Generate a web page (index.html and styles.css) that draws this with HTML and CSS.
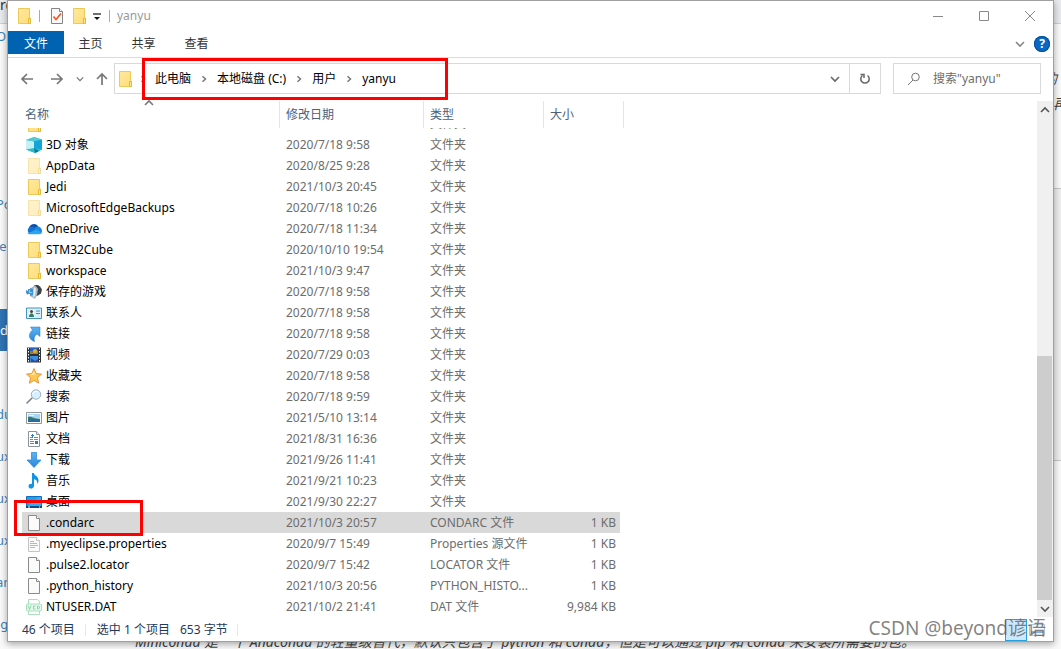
FILE: index.html
```html
<!DOCTYPE html>
<html lang="zh-CN">
<head>
<meta charset="utf-8">
<meta name="viewport" content="width=device-width, initial-scale=1">
<title>yanyu</title>
<link rel="stylesheet" href="styles.css">
</head>
<body>
<svg class="sprite" aria-hidden="true">
  <defs>
    <linearGradient id="gold" x1="0" y1="0" x2="1" y2="1"><stop offset="0" stop-color="#ffe9a0"/><stop offset="1" stop-color="#ffdd75"/></linearGradient>
    <linearGradient id="sky" x1="0" y1="0" x2="0" y2="1"><stop offset="0" stop-color="#5bb4f0"/><stop offset="1" stop-color="#2a86dc"/></linearGradient>
  </defs>
  <symbol id="folder" viewBox="0 0 16 16">
    <path d="M2.500.5h11v9l1 .5v5.500h-12z" fill="url(#gold)" stroke="#ecc95a"/><path d="M12.500 15.500V10.500h2v5z" fill="#ffe590" stroke="#e5b93a"/>
  </symbol>
  <symbol id="cube" viewBox="0 0 16 16">
    <path d="M8 0l8 2.500v10L9 16 0 12.500V3z" fill="#35c3d6"/><path d="M0 3l8 1.500V14l-8-1.500z" fill="#c5f1f3"/><path d="M0 3l8-3 8 2.500-8 2z" fill="#55c8d4"/><path d="M8 4.500l8-2v10L8 13z" fill="#12a5d8"/><path d="M0 12.500L8 11l8 1.500L9 16z" fill="#2bbccb"/><path d="M8 11l5 3-4 2z" fill="#0a7a9a"/>
  </symbol>
  <symbol id="cloud" viewBox="0 0 16 16">
    <path d="M3 8a5 5 0 0 1 9-3l1 4-9 3z" fill="#0a50a8"/><path d="M4 13a4 4 0 0 1-1-6.500c2-1.500 5-.5 7 1.500l3 5z" fill="#1273d4"/><path d="M9 6.500c3-2.500 7 0 7 3.500 0 2-1 3-3 3H9z" fill="#1a86e0"/><path d="M1.500 12.500L10 8.500l6 3c-.5 1.300-1.500 1.700-3 1.700H4c-1 0-2 0-2.500-.7z" fill="#2ba5ee"/>
  </symbol>
  <symbol id="game" viewBox="0 0 16 16">
    <path d="M8 1h4l2 1.500 2 3-1 4-3 2-3 1z" fill="#3c4248"/><path d="M5 4l4-3 3 4-1 6-2 4-5-3z" fill="#a9bac4"/><path d="M8 3l2 2-1 7-2 1z" fill="#e4eaed"/><path d="M2 5h2V4l3 1v6l-3 1v-2H2v1L0 9V6l2 1z" fill="#3e95cf"/><path d="M3 6h1v2h2v1H3z" fill="#8ccdf0"/>
  </symbol>
  <symbol id="contact" viewBox="0 0 16 16">
    <path d="M.5 3h15v10.500H.5z" fill="#d9effa" stroke="#4594bd"/><path d="M3 5h5v7H3z" fill="#fff"/><circle cx="5.500" cy="6.500" r="1.600" fill="#54453c"/><path d="M3 12c0-5 5-5 5 0z" fill="#347d62"/><path d="M10 6h4M10 8.500h4" stroke="#3d91c4"/>
  </symbol>
  <symbol id="link" viewBox="0 0 16 16">
    <path d="M4.500 1h9.500v9.500L11 8c-2.500 2-3.500 4-2.500 7.500C3.500 14 1 9 6.500 4z" fill="url(#sky)" stroke="#2877bd" stroke-width=".5"/>
  </symbol>
  <symbol id="film" viewBox="0 0 16 16">
    <path d="M1 .5h14v15H1z" fill="#30343a"/><path d="M4 1h8v6H4z" fill="#255fbe"/><path d="M4 9h8v6H4z" fill="#3f8fde"/><path d="M4 4h8v3H4z" fill="#729741"/><circle cx="9" cy="4" r="2" fill="#e6ae31"/><circle cx="6" cy="5" r="1" fill="#cf4836"/><path d="M5 11l4 3 3-2v3H5z" fill="#234cae"/><path d="M2.500 1v15M13.500 1v15" stroke="#fff" stroke-dasharray="1.500 1.500"/>
  </symbol>
  <symbol id="star" viewBox="0 0 16 16">
    <path d="M8 .5l2.200 5 5.300.6-4 3.600 1.200 5.500L8 12.400l-4.700 2.800 1.200-5.500-4-3.600 5.300-.6z" fill="#ffc650" stroke="#df8524" stroke-width=".8"/><path d="M8 3l1.500 3.500-5 1z" fill="#ffe5a1"/>
  </symbol>
  <symbol id="lens" viewBox="0 0 16 16">
    <path d="M6 9l-5 5" stroke="#7a858e" stroke-width="1.600" stroke-linecap="round"/><circle cx="10" cy="5.500" r="4.700" fill="#d9efff" stroke="#9dafbd"/><path d="M7 5a3 3 0 0 1 5-2" fill="none" stroke="#fff"/>
  </symbol>
  <symbol id="image" viewBox="0 0 16 16">
    <path d="M.5 2.500h15v11H.5z" fill="#fff" stroke="#8f979c"/><path d="M2 4h12v8H2z" fill="#a8d5f6"/><path d="M2 7c4-1 5 2 12 2v3H2z" fill="#397b6a"/><path d="M2 10c5-1 8-1 12 0v2H2z" fill="#286aa7"/><path d="M3 5h5v1H3z" fill="#fff"/>
  </symbol>
  <symbol id="document" viewBox="0 0 16 16">
    <path d="M2.500.5h8l3 3v12h-11z" fill="#fff" stroke="#8d9499"/><path d="M10.500.5v3h3" fill="#eee" stroke="#8d9499"/><path d="M4 6.500h3M8 6.500h4M4 8.500h3M8 8.500h4M4 10.500h4M4 12.500h4" stroke="#4599c2"/><path d="M5 4.500h3M6.500 3v4" stroke="#2c7fb1"/><path d="M9 10h3v3H9z" fill="#3f7d9b"/>
  </symbol>
  <symbol id="download" viewBox="0 0 16 16">
    <path d="M5.500.5h5V8H15l-7 7.500L1 8h4.500z" fill="url(#sky)" stroke="#2681d0" stroke-width=".7"/>
  </symbol>
  <symbol id="music" viewBox="0 0 16 16">
    <path d="M6 0h2c0 3 5 3 4.500 8-.1 1.500-.8 2.300-1.500 3 .6-3-.5-4-3-5v6.500c0 4-5.500 4-5.500.8 0-2 2-2.800 3.500-2.300z" fill="#0f94e8"/>
  </symbol>
  <symbol id="desktop" viewBox="0 0 16 16">
    <path d="M.5 2.500h15v11H.5z" fill="#1ba1ed" stroke="#0d6fc0"/><path d="M1 13L12 3h3v10z" fill="#32adf3"/><path d="M0 12h16v2H0z" fill="#0b4b83"/><path d="M2 13h2M13 13h1" stroke="#fff"/>
  </symbol>
  <symbol id="file" viewBox="0 0 16 16">
    <path d="M2.500.5h8l3 3v12h-11z" fill="#fbfbfb" stroke="#8b8b8b"/><path d="M10.500.5v3h3" fill="#fff" stroke="#8b8b8b"/>
  </symbol>
  <symbol id="textfile" viewBox="0 0 16 16">
    <path d="M2.500 1.500h8l3 3v11h-11z" fill="#fafafa" stroke="#c4c4c4"/><path d="M10.500 1.500v3h3" fill="#fff" stroke="#c4c4c4"/><path d="M4 5.500h4M4 7.500h7M4 9.500h8M4 11.500h5" stroke="#b4b8bb"/>
  </symbol>
  <symbol id="vcd" viewBox="0 0 16 16">
    <path d="M2.500 5V.5h9l2 2V5M2.500 12v3.500h11V12" fill="#fff" stroke="#a8dfbd"/><rect x=".5" y="5" width="15" height="7" rx="1" fill="#e8f8ee" stroke="#a8dfbd"/><path d="M2 6.500l1.500 4 1.500-4M9.500 7h-2v3h2M11.500 7v3h1l1-1V8l-1-1z" fill="none" stroke="#8fd3aa"/>
  </symbol>
  <symbol id="chev-right" viewBox="0 0 8 8"><path d="M2.500 1.200L5.500 4 2.500 6.800" fill="none" stroke="currentColor" stroke-width="1.500"/></symbol>
  <symbol id="chev-down" viewBox="0 0 10 10"><path d="M1 3l4 4 4-4" fill="none" stroke="currentColor" stroke-width="1.600"/></symbol>
  <symbol id="chev-up" viewBox="0 0 10 10"><path d="M1 7l4-4 4 4" fill="none" stroke="currentColor" stroke-width="1.600"/></symbol>
</svg>

<div class="page" aria-hidden="true">
  <div class="page-top">ro</div>
  <ul class="page-nav">
    <li>Op</li><li></li><li></li><li></li><li>Po</li><li>le</li><li></li><li class="current">da</li><li></li><li>du</li><li>ux</li><li>ux</li><li>ux</li><li>an</li><li>-g</li>
  </ul>
  <div class="page-side">
    <p class="tail">的</p><p>再</p>
    <div class="page-code"></div>
  </div>
  <p class="page-text">Miniconda 是一个 Anaconda 的轻量级替代，默认只包含了 python 和 conda，但是可以通过 pip 和 conda 来安装所需要的包。</p>
</div>

<main class="window">
  <header class="titlebar">
    <svg class="icon"><use href="#folder"/></svg>
    <span class="bar"></span>
    <button class="plain quick" aria-label="属性"><svg class="icon" viewBox="0 0 16 16"><path d="M2.500.5h8l3 3v12h-11z" fill="#f8f8f8" stroke="#858585"/><path d="M10.500.5v3h3" fill="#fff" stroke="#858585"/><path d="M4.500 8.500l2.500 3 5-6" fill="none" stroke="#ee5a24" stroke-width="1.700"/></svg></button>
    <button class="plain quick" aria-label="新建文件夹"><svg class="icon"><use href="#folder"/></svg></button>
    <button class="plain more" aria-label="自定义快速访问工具栏"><svg width="8" height="8" viewBox="0 0 8 8"><path d="M0 1h8" stroke="#111" stroke-width="1.200"/><path d="M1 4h6l-3 3z" fill="#111"/></svg></button>
    <span class="bar"></span>
    <h1 class="title">yanyu</h1>
    <div class="controls">
      <button class="plain control" aria-label="最小化"><svg width="12" height="12" viewBox="0 0 12 12"><path d="M1 6.500h10" stroke="#888"/></svg></button>
      <button class="plain control" aria-label="最大化"><svg width="12" height="12" viewBox="0 0 12 12"><path d="M1.500 1.500h9v9h-9z" fill="none" stroke="#888"/></svg></button>
      <button class="plain control" aria-label="关闭"><svg width="12" height="12" viewBox="0 0 12 12"><path d="M1 1l10 10M11 1L1 11" stroke="#888"/></svg></button>
    </div>
  </header>

  <nav class="tabs">
    <button class="plain tab file">文件</button>
    <button class="plain tab">主页</button>
    <button class="plain tab">共享</button>
    <button class="plain tab">查看</button>
    <div class="tab-tools">
      <button class="plain expand" aria-label="展开功能区"><svg width="10" height="10"><use href="#chev-down"/></svg></button>
      <button class="plain help" aria-label="帮助">?</button>
    </div>
  </nav>

  <div class="navbar">
    <div class="arrows">
      <button class="plain" aria-label="后退"><svg width="14" height="14" viewBox="0 0 14 14"><path d="M13 7H2M7 2L2 7l5 5" fill="none" stroke="#777" stroke-width="1.700"/></svg></button>
      <button class="plain" aria-label="前进"><svg width="14" height="14" viewBox="0 0 14 14"><path d="M1 7h11M7 2l5 5-5 5" fill="none" stroke="#777" stroke-width="1.700"/></svg></button>
      <button class="plain recent" aria-label="最近浏览的位置"><svg width="8" height="8"><use href="#chev-down"/></svg></button>
      <button class="plain" aria-label="向上"><svg width="14" height="14" viewBox="0 0 14 14"><path d="M7 13V2M2 7l5-5 5 5" fill="none" stroke="#777" stroke-width="1.700"/></svg></button>
    </div>
    <div class="address">
      <svg class="icon"><use href="#folder"/></svg>
      <svg class="sep"><use href="#chev-right"/></svg>
      <button class="plain crumb">此电脑</button>
      <svg class="sep"><use href="#chev-right"/></svg>
      <button class="plain crumb">本地磁盘 (C:)</button>
      <svg class="sep"><use href="#chev-right"/></svg>
      <button class="plain crumb">用户</button>
      <svg class="sep"><use href="#chev-right"/></svg>
      <button class="plain crumb">yanyu</button>
      <button class="plain drop" aria-label="以前的位置"><svg width="10" height="10"><use href="#chev-down"/></svg></button>
      <button class="plain refresh" aria-label="刷新"><svg width="12" height="12" viewBox="0 0 12 12"><path d="M8.500 2.500A4.200 4.200 0 1 1 3.500 2.500" fill="none" stroke="#666" stroke-width="1.500"/><path d="M1.500 1.500H5V5" fill="none" stroke="#666" stroke-width="1.500"/></svg></button>
    </div>
    <label class="search">
      <svg width="14" height="14" viewBox="0 0 14 14"><circle cx="8.500" cy="5" r="3.800" fill="none" stroke="#777"/><path d="M6 8l-5 5" stroke="#777"/></svg>
      <input type="text" placeholder='搜索"yanyu"' aria-label="搜索">
    </label>
  </div>

  <section class="content">
    <table class="files">
      <colgroup><col class="c-name"><col class="c-date"><col class="c-type"><col class="c-size"></colgroup>
      <thead><tr><th class="sorted">名称<svg class="sort"><use href="#chev-up"/></svg></th><th>修改日期</th><th>类型</th><th>大小</th></tr></thead>
      <tbody>
        <tr class="cut"><td><div><span class="name"><svg class="icon"><use href="#folder"/></svg></span></div></td><td><div><span>2020/7/18 9:58</span></div></td><td><div><span>文件夹</span></div></td><td></td></tr>
        <tr><td><span class="name"><svg class="icon"><use href="#cube"/></svg>3D 对象</span></td><td>2020/7/18 9:58</td><td>文件夹</td><td></td></tr>
        <tr><td><span class="name"><svg class="icon dim"><use href="#folder"/></svg>AppData</span></td><td>2020/8/25 9:28</td><td>文件夹</td><td></td></tr>
        <tr><td><span class="name"><svg class="icon"><use href="#folder"/></svg>Jedi</span></td><td>2021/10/3 20:45</td><td>文件夹</td><td></td></tr>
        <tr><td><span class="name"><svg class="icon dim"><use href="#folder"/></svg>MicrosoftEdgeBackups</span></td><td>2020/7/18 10:26</td><td>文件夹</td><td></td></tr>
        <tr><td><span class="name"><svg class="icon"><use href="#cloud"/></svg>OneDrive</span></td><td>2020/7/18 11:34</td><td>文件夹</td><td></td></tr>
        <tr><td><span class="name"><svg class="icon"><use href="#folder"/></svg>STM32Cube</span></td><td>2020/10/10 19:54</td><td>文件夹</td><td></td></tr>
        <tr><td><span class="name"><svg class="icon"><use href="#folder"/></svg>workspace</span></td><td>2021/10/3 9:47</td><td>文件夹</td><td></td></tr>
        <tr><td><span class="name"><svg class="icon"><use href="#game"/></svg>保存的游戏</span></td><td>2020/7/18 9:58</td><td>文件夹</td><td></td></tr>
        <tr><td><span class="name"><svg class="icon"><use href="#contact"/></svg>联系人</span></td><td>2020/7/18 9:58</td><td>文件夹</td><td></td></tr>
        <tr><td><span class="name"><svg class="icon"><use href="#link"/></svg>链接</span></td><td>2020/7/18 9:58</td><td>文件夹</td><td></td></tr>
        <tr><td><span class="name"><svg class="icon"><use href="#film"/></svg>视频</span></td><td>2020/7/29 0:03</td><td>文件夹</td><td></td></tr>
        <tr><td><span class="name"><svg class="icon"><use href="#star"/></svg>收藏夹</span></td><td>2020/7/18 9:58</td><td>文件夹</td><td></td></tr>
        <tr><td><span class="name"><svg class="icon"><use href="#lens"/></svg>搜索</span></td><td>2020/7/18 9:59</td><td>文件夹</td><td></td></tr>
        <tr><td><span class="name"><svg class="icon"><use href="#image"/></svg>图片</span></td><td>2021/5/10 13:14</td><td>文件夹</td><td></td></tr>
        <tr><td><span class="name"><svg class="icon"><use href="#document"/></svg>文档</span></td><td>2021/8/31 16:36</td><td>文件夹</td><td></td></tr>
        <tr><td><span class="name"><svg class="icon"><use href="#download"/></svg>下载</span></td><td>2021/9/26 11:41</td><td>文件夹</td><td></td></tr>
        <tr><td><span class="name"><svg class="icon"><use href="#music"/></svg>音乐</span></td><td>2021/9/21 10:23</td><td>文件夹</td><td></td></tr>
        <tr><td><span class="name"><svg class="icon"><use href="#desktop"/></svg>桌面</span></td><td>2021/9/30 22:27</td><td>文件夹</td><td></td></tr>
        <tr class="selected"><td><span class="name"><svg class="icon"><use href="#file"/></svg>.condarc</span></td><td>2021/10/3 20:57</td><td>CONDARC 文件</td><td>1 KB</td></tr>
        <tr><td><span class="name"><svg class="icon"><use href="#textfile"/></svg>.myeclipse.properties</span></td><td>2020/9/7 15:49</td><td>Properties 源文件</td><td>1 KB</td></tr>
        <tr><td><span class="name"><svg class="icon"><use href="#file"/></svg>.pulse2.locator</span></td><td>2020/9/7 15:42</td><td>LOCATOR 文件</td><td>1 KB</td></tr>
        <tr><td><span class="name"><svg class="icon"><use href="#file"/></svg>.python_history</span></td><td>2021/10/3 20:56</td><td>PYTHON_HISTO...</td><td>1 KB</td></tr>
        <tr><td><span class="name"><svg class="icon"><use href="#vcd"/></svg>NTUSER.DAT</span></td><td>2021/10/2 21:41</td><td>DAT 文件</td><td>9,984 KB</td></tr>
      </tbody>
    </table>
    <div class="scrollbar">
      <button class="plain" aria-label="向上滚动"><svg width="10" height="10"><use href="#chev-up"/></svg></button>
      <div class="track"></div>
      <div class="thumb"></div>
      <button class="plain" aria-label="向下滚动"><svg width="10" height="10"><use href="#chev-down"/></svg></button>
    </div>
  </section>

  <footer class="status">
    <span class="count">46 个项目</span>
    <span class="chosen">选中 1 个项目</span>
    <span class="bytes">653 字节</span>
    <button class="plain view" aria-label="详细信息"></button>
    <button class="plain view-large" aria-label="大图标"><svg width="16" height="12" viewBox="0 0 16 12"><path d="M.5.5h15v11H.5z" fill="#f4faff" stroke="#b6c5d4"/><path d="M2 7h12v2H2z" fill="#7fb0ec"/></svg></button>
  </footer>
</main>

<div class="mark mark-path"></div>
<div class="mark mark-file"></div>
<div class="watermark">CSDN @beyond谚语</div>
</body>
</html>
```
FILE: styles.css
```css
* { box-sizing: border-box; }

body {
  margin: 0;
  min-height: 100vh;
  padding: 0 7px 7px;
  display: flex;
  position: relative;
  overflow: hidden;
  background: #fff;
  font: 12px/20px "Noto Sans", "Noto Sans CJK SC", sans-serif;
  color: #000;
}

svg { display: block; flex: none; }
.sprite { position: absolute; width: 0; height: 0; }
.icon { width: 16px; height: 16px; }
.dim { opacity: 0.5; }

.plain {
  border: 0;
  padding: 0;
  background: none;
  font: inherit;
  color: inherit;
  display: flex;
  align-items: center;
  justify-content: center;
}

/* Page behind the window */
.page {
  position: absolute;
  inset: 0;
  overflow: hidden;
  background: #fafafa;
}
.page p { margin: 0; }
.page-top {
  height: 24px;
  background: #e9eaee;
  border-bottom: 1px solid #cfcfcf;
  font-size: 14px;
  line-height: 10px;
  color: #333;
}
.page-nav {
  position: absolute;
  left: 0;
  top: 15px;
  width: 8px;
  margin: 0;
  padding: 0;
  overflow: hidden;
  list-style: none;
  font-size: 13px;
  line-height: 42px;
  color: #4183b8;
}
.page-nav li { height: 42px; text-indent: -4px; white-space: nowrap; }
.page-nav .current { background: #2f74b5; color: #fff; text-indent: 0; }
.page-side {
  position: absolute;
  right: 0;
  top: 66px;
  width: 8px;
  font-size: 14px;
  line-height: 25px;
  font-style: italic;
  color: #444;
  overflow: hidden;
}
.page-side .tail { text-indent: -10px; white-space: nowrap; }
.page-code {
  height: 273px;
  margin-top: 72px;
  background: #eeeeee;
  border: solid #c8c8c8;
  border-width: 1px 0;
}
.page-text {
  position: absolute;
  left: 135px;
  bottom: -3px;
  white-space: nowrap;
  font-size: 14px;
  font-style: italic;
  color: #444;
}

/* Explorer window */
.window {
  position: relative;
  flex: 1;
  min-width: 0;
  display: flex;
  flex-direction: column;
  background: #fff;
  border: 1px solid #a0a0a0;
  box-shadow: 0 2px 7px rgba(0, 0, 0, 0.35);
}

.titlebar { display: flex; align-items: center; height: 30px; padding-left: 8px; }
.bar { width: 1px; height: 12px; background: #aaa; }
.titlebar > .icon { margin-right: 7px; }
.quick { margin-left: 9px; }
.quick + .quick { margin-left: 6px; }
.more { margin: 2px 8px 0 6px; }
.title { margin: 0 0 0 7px; font-size: 12px; font-weight: 400; color: #999; }
.controls { margin-left: auto; display: flex; }
.control { width: 46px; height: 28px; }

.tabs { display: flex; height: 27px; padding-bottom: 3px; border-bottom: 1px solid #dadbdc; color: #333; }
.tab { width: 53px; padding-top: 2px; }
.tab.file { width: 56px; background: #0063b1; color: #fff; }
.tab-tools { margin-left: auto; display: flex; align-items: center; gap: 9px; padding: 3px 3px 0 0; color: #888; }
.help {
  width: 16px;
  height: 16px;
  border-radius: 50%;
  background: #0968c4;
  box-shadow: 0 0 0 1px #0a4f96 inset;
  color: #fff;
  font-weight: 700;
}

.navbar { display: flex; padding: 5px 12px 7px 12px; height: 43px; }
.arrows { display: flex; width: 94px; gap: 16px; align-items: center; color: #777; }
.recent { margin: 0 -5px 0 -4px; }
.address { flex: 1; display: flex; align-items: center; border: 1px solid #d9d9d9; padding-left: 2px; }
.sep { width: 8px; height: 8px; margin: 0 8px 0 9px; color: #777; }
.address .icon + .sep { margin: 0 8px 0 6px; }
.crumb { white-space: nowrap; }
.crumb:nth-of-type(n + 2) { padding-left: 1px; }
.drop { margin-left: auto; width: 28px; height: 100%; color: #666; }
.refresh { width: 31px; height: 100%; border-left: 1px solid #d9d9d9; }
.search { display: flex; align-items: center; gap: 12px; width: 148px; margin-left: 12px; padding-left: 13px; border: 1px solid #d9d9d9; }
.search input { flex: 1; min-width: 0; border: 0; padding: 0; outline: 0; background: none; font: inherit; }
.search input::placeholder { color: #6d6d6d; opacity: 1; }

.content { flex: 1; display: flex; justify-content: space-between; align-items: stretch; padding-left: 14px; }
.files { width: 602px; align-self: flex-start; table-layout: fixed; border-collapse: separate; border-spacing: 0; }
.c-name { width: 258px; }
.c-date { width: 144px; }
.c-type { width: 120px; }
.c-size { width: 80px; }
th { height: 27px; padding: 0 0 0 6px; border-right: 1px solid #e5e5e5; text-align: left; font-weight: 400; color: #4c607a; }
th.sorted { padding-left: 3px; position: relative; }
.sort { position: absolute; left: 122px; top: -3px; width: 10px; height: 10px; color: #777; }
td { height: 21px; padding: 0 0 0 6px; line-height: 21px; color: #6d6d6d; white-space: nowrap; overflow: hidden; }
td:first-child { padding-left: 4px; color: #000; }
td:last-child { padding: 0 4px 0 0; border-right: 4px solid transparent; background-clip: padding-box; text-align: right; }
.name { display: flex; align-items: center; gap: 4px; height: 21px; }
.cut td { height: 6px; }
.cut div { height: 6px; display: flex; align-items: flex-end; overflow: hidden; }
.selected td { background-color: #d9d9d9; }

.scrollbar { width: 16px; display: flex; flex-direction: column; background: #f0f0f0; color: #555; }
.scrollbar button { height: 17px; }
.track { flex: 238; }
.thumb { flex: 245; margin-right: 1px; background: #cdcdcd; }

.status { display: flex; align-items: center; height: 24px; padding: 1px 8px 0 14px; color: #1e395b; }
.count { padding-right: 10px; border-right: 1px solid #e8e8e8; line-height: 12px; }
.chosen { margin-left: 11px; }
.bytes { margin-left: 10px; padding-right: 9px; border-right: 1px solid #e8e8e8; line-height: 12px; }
.view { margin-left: auto; width: 22px; height: 22px; border: 1px solid #26a0da; background: #cce8ff; }
.view-large { margin-left: 2px; }

/* Overlays */
.mark { position: absolute; border: 3px solid #fe0000; }
.mark-path { left: 142px; top: 58px; width: 306px; height: 42px; }
.mark-file { left: 14px; top: 500px; width: 129px; height: 36px; }
.watermark {
  position: absolute;
  right: 15px;
  bottom: 9px;
  font-size: 19px;
  line-height: 24px;
  color: rgba(90, 90, 90, 0.75);
  white-space: nowrap;
}
```
